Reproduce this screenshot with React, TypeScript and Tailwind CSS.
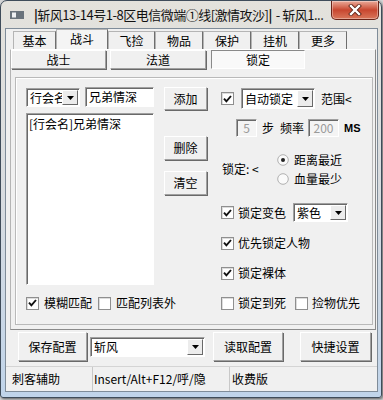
import type { ReactNode } from 'react';

function Check({ on }: { on?: boolean }) {
  return (
    <span className="flex h-[13px] w-[13px] shrink-0 items-center justify-center border border-[#8f8f8f] bg-white shadow-[inset_1px_1px_0_#dcdcdc]">
      {on && (
        <svg width="9" height="8" viewBox="0 0 9 8">
          <path d="M1 3.6 L3.4 6.4 L8 1" fill="none" stroke="#111" strokeWidth="1.9" />
        </svg>
      )}
    </span>
  );
}

function Radio({ on }: { on?: boolean }) {
  return (
    <svg width="12" height="12" viewBox="0 0 12 12" className="shrink-0">
      <circle cx="6" cy="6" r="5.3" fill="#fafafa" stroke="#b0b0b0" />
      {on && <circle cx="6" cy="6" r="2" fill="#222" />}
    </svg>
  );
}

function Arrow() {
  return (
    <span className="flex h-full w-[16px] shrink-0 items-center justify-center border border-t-white border-l-white border-r-[#696969] border-b-[#696969] bg-[#ececec]">
      <svg width="7" height="4" viewBox="0 0 7 4">
        <path d="M0 0H7L3.5 4Z" fill="#000" />
      </svg>
    </span>
  );
}

const sunken =
  'border border-t-[#a0a0a0] border-l-[#a0a0a0] border-r-white border-b-white shadow-[inset_1px_1px_0_#696969]';

function Combo({ text, className }: { text: string; className: string }) {
  return (
    <div className={`flex items-stretch bg-white p-[1px] ${sunken} ${className}`}>
      <span className="flex flex-1 items-center overflow-hidden whitespace-nowrap pl-[2px]">{text}</span>
      <Arrow />
    </div>
  );
}

function Btn({ children, className }: { children: ReactNode; className: string }) {
  return (
    <div
      className={`flex shrink-0 items-center justify-center border border-t-white border-l-white border-r-[#a0a0a0] border-b-[#a0a0a0] bg-[#f0f0f0] shadow-[1px_1px_0_#696969] ${className}`}>
      {children}
    </div>
  );
}

function Row({ on, label }: { on?: boolean; label: string }) {
  return (
    <div className="flex h-[14px] items-center">
      <Check on={on} />
      <span className="ml-[4px]">{label}</span>
    </div>
  );
}

const tabs: [string, string, boolean][] = [
  ['基本', 'w-[43px]', false],
  ['战斗', 'w-[52px]', true],
  ['飞捡', 'w-[47px]', false],
  ['物品', 'w-[48px]', false],
  ['保护', 'w-[48px]', false],
  ['挂机', 'w-[48px]', false],
  ['更多', 'w-[48px]', false],
];

function App() {
  return (
    <div className="h-[400px] w-[383px] overflow-hidden bg-[#d6d7d8] font-['Noto_Sans_CJK_SC','Liberation_Sans',sans-serif] text-[12px] leading-[14px] text-black">
      <div className="flex h-[398px] w-[382px] flex-col rounded-t-[7px] rounded-b-[3px] border border-[#3f4c5a] bg-linear-to-b from-[#e4e2dc] via-[#d8dce0] to-[#c0d4ea] shadow-[1px_1px_3px_rgba(0,0,0,0.6)]">
        {/* title bar */}
        <div className="flex h-[27px] shrink-0 items-start">
          <div className="flex h-full items-center pl-[9px]">
            <svg width="14" height="8" viewBox="0 0 14 8">
              <rect x="0" y="0" width="14" height="8" fill="#6a737c" />
              <rect x="2" y="1.5" width="4" height="5" fill="#eef0f2" />
            </svg>
          </div>
          <div className="flex h-full min-w-0 flex-1 items-center overflow-hidden whitespace-nowrap pl-[10px] text-[13px] tracking-[-0.5px] text-[#111]">
            <span className="font-bold">|</span>
            <span>斩风13-14号1-8区电信微端①线[激情攻沙]</span>
            <span className="font-bold">|</span>
            <span className="ml-[4px]">- 斩风1...</span>
          </div>
          <div className="mr-[2px] flex h-[19px] w-[48px] shrink-0 items-center justify-center rounded-b-[5px] border border-t-0 border-[#6b2418] bg-linear-to-b from-[#e9a999] via-[#c8462f] to-[#d9765a] shadow-[inset_0_0_0_1px_rgba(255,255,255,0.35)]">
            <svg width="14" height="12" viewBox="0 0 14 12">
              <path d="M3 2 L11 10 M11 2 L3 10" stroke="#5a2014" strokeWidth="4" strokeLinecap="square" />
              <path d="M3 2 L11 10 M11 2 L3 10" stroke="#fff" strokeWidth="2.4" strokeLinecap="square" />
            </svg>
          </div>
        </div>

        {/* client */}
        <div className="mb-[5px] ml-[4px] mr-[3px] flex flex-1 flex-col border border-[#7f8c99] bg-[#f0f0f0]">
          {/* tab strip */}
          <div className="flex h-[20px] shrink-0 items-end pl-[7px]">
            {tabs.map(([t, w, sel]) => (
              <div
                key={t}
                className={`flex shrink-0 items-center justify-center border border-b-0 border-t-[#b4b4b4] border-l-[#b4b4b4] border-r-[#6e6e6e] ${w} ${
                  sel ? 'h-[20px] bg-[#f4f4f4] pb-[2px]' : 'h-[18px] bg-[#f0f0f0]'
                }`}>
                {t}
              </div>
            ))}
          </div>

          {/* tab page */}
          <div className="ml-[4px] flex h-[281px] w-[366px] shrink-0 flex-col border border-t-white border-l-[#b4b4b4] border-r-[#8a8a8a] border-b-[#8a8a8a]">
            <div className="flex h-[20px] shrink-0">
              <Btn className="h-[19px] w-[95px]">战士</Btn>
              <Btn className="ml-[4px] h-[19px] w-[96px]">法道</Btn>
              <div className="ml-[5px] flex h-[19px] w-[94px] items-center justify-center border border-t-[#8a8a8a] border-l-[#8a8a8a] border-r-white border-b-white bg-[#f9f9f9]">
                锁定
              </div>
            </div>

            {/* group box */}
            <div className="ml-[4px] mt-[7px] flex h-[248px] w-[358px] border border-[#b9b9b9] pl-[10px] pt-[9px] shadow-[inset_1px_1px_0_#fff]">
              {/* left column */}
              <div className="mt-[1px] flex w-[128px] flex-col">
                <div className="flex h-[20px] items-start">
                  <Combo text="行会名" className="h-[19px] w-[54px]" />
                  <div className={`-mt-[1px] ml-[5px] flex h-[20px] w-[69px] items-center bg-white pl-[3px] ${sunken}`}>
                    兄弟情深
                  </div>
                </div>
                <div className={`mt-[5px] h-[172px] w-[128px] bg-white pl-[2px] pt-[3px] ${sunken}`}>
                  [行会名]兄弟情深
                </div>
                <div className="mt-[11px] flex h-[14px] items-center whitespace-nowrap">
                  <Check on />
                  <span className="ml-[5px]">模糊匹配</span>
                  <span className="ml-[6px]">
                    <Check />
                  </span>
                  <span className="ml-[5px]">匹配列表外</span>
                </div>
              </div>

              {/* middle buttons */}
              <div className="ml-[10px] flex w-[43px] flex-col">
                <Btn className="h-[23px] w-[43px]">添加</Btn>
                <Btn className="mt-[26px] h-[24px] w-[43px]">删除</Btn>
                <Btn className="mt-[11px] h-[24px] w-[43px]">清空</Btn>
              </div>

              {/* right column */}
              <div className="ml-[14px] mt-[1px] flex flex-1 flex-col whitespace-nowrap">
                <div className="flex h-[21px] items-center">
                  <Check on />
                  <Combo text="自动锁定" className="ml-[7px] h-[21px] w-[74px]" />
                  <span className="ml-[6px]">范围&lt;</span>
                </div>
                <div className="mt-[10px] flex h-[18px] items-center pl-[15px]">
                  <div className={`flex h-[18px] w-[21px] items-center justify-center bg-[#f4f4f4] text-[#9a9a9a] ${sunken}`}>5</div>
                  <span className="ml-[5px]">步</span>
                  <span className="ml-[6px]">频率</span>
                  <div className={`ml-[4px] flex h-[18px] w-[31px] items-center justify-center bg-[#f4f4f4] text-[#9a9a9a] ${sunken}`}>
                    200
                  </div>
                  <span className="ml-[5px] font-['Liberation_Sans',sans-serif] text-[11px] font-bold">MS</span>
                </div>
                <div className="mt-[13px] flex h-[38px]">
                  <div className="flex w-[56px] items-center pl-[1px]">锁定: &lt;</div>
                  <div className="flex flex-col">
                    <div className="flex h-[19px] items-center">
                      <Radio on />
                      <span className="ml-[5px]">距离最近</span>
                    </div>
                    <div className="flex h-[19px] items-center">
                      <Radio />
                      <span className="ml-[5px]">血量最少</span>
                    </div>
                  </div>
                </div>
                <div className="mt-[15px] flex h-[19px] items-center">
                  <Check on />
                  <span className="ml-[4px]">锁定变色</span>
                  <Combo text="紫色" className="ml-[7px] h-[19px] w-[55px]" />
                </div>
                <div className="mt-[14px]">
                  <Row on label="优先锁定人物" />
                </div>
                <div className="mt-[16px]">
                  <Row on label="锁定裸体" />
                </div>
                <div className="mt-[16px] flex h-[14px] items-center">
                  <Check />
                  <span className="ml-[4px]">锁定到死</span>
                  <span className="ml-[9px]">
                    <Check />
                  </span>
                  <span className="ml-[4px]">捡物优先</span>
                </div>
              </div>
            </div>
          </div>

          {/* bottom buttons */}
          <div className="mt-[1px] flex h-[31px] shrink-0 items-center">
            <Btn className="ml-[12px] h-[29px] w-[69px]">保存配置</Btn>
            <Combo text="斩风" className="ml-[3px] h-[20px] w-[115px]" />
            <Btn className="ml-[8px] h-[29px] w-[70px]">读取配置</Btn>
            <Btn className="ml-[17px] h-[29px] w-[71px]">快捷设置</Btn>
          </div>

          {/* status bar */}
          <div className="mt-[4px] flex flex-1 items-stretch border-t border-[#d4d4d4] whitespace-nowrap">
            <div className="flex w-[87px] items-center border-r border-[#c8c8c8] pl-[6px]">刺客辅助</div>
            <div className="flex w-[137px] items-center border-r border-[#c8c8c8] pl-[1px]">Insert/Alt+F12/呼/隐</div>
            <div className="flex flex-1 items-center pl-[2px]">收费版</div>
          </div>
        </div>
      </div>
    </div>
  );
}

export default App;
